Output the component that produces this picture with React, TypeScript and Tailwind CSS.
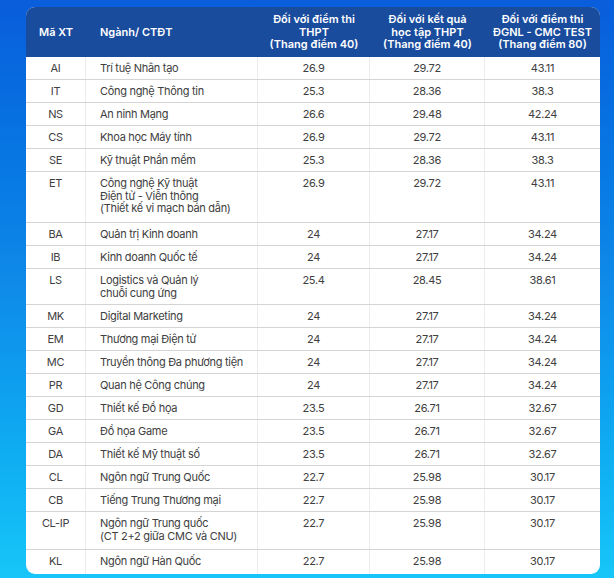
import React from "react";

type Row = { code: string; name: string[]; a: string; b: string; c: string; h: string };

const rows: Row[] = [
  { code: "AI", name: ["Trí tuệ Nhân tạo"], a: "26.9", b: "29.72", c: "43.11", h: "h-[23px]" },
  { code: "IT", name: ["Công nghệ Thông tin"], a: "25.3", b: "28.36", c: "38.3", h: "h-[23px]" },
  { code: "NS", name: ["An ninh Mạng"], a: "26.6", b: "29.48", c: "42.24", h: "h-[23px]" },
  { code: "CS", name: ["Khoa học Máy tính"], a: "26.9", b: "29.72", c: "43.11", h: "h-[23px]" },
  { code: "SE", name: ["Kỹ thuật Phần mềm"], a: "25.3", b: "28.36", c: "38.3", h: "h-[23px]" },
  {
    code: "ET",
    name: ["Công nghệ Kỹ thuật", "Điện tử - Viễn thông", "(Thiết kế vi mạch bán dẫn)"],
    a: "26.9",
    b: "29.72",
    c: "43.11",
    h: "h-[51px]",
  },
  { code: "BA", name: ["Quản trị Kinh doanh"], a: "24", b: "27.17", c: "34.24", h: "h-[23px]" },
  { code: "IB", name: ["Kinh doanh Quốc tế"], a: "24", b: "27.17", c: "34.24", h: "h-[23px]" },
  { code: "LS", name: ["Logistics và Quản lý", "chuỗi cung ứng"], a: "25.4", b: "28.45", c: "38.61", h: "h-[36px]" },
  { code: "MK", name: ["Digital Marketing"], a: "24", b: "27.17", c: "34.24", h: "h-[23px]" },
  { code: "EM", name: ["Thương mại Điện tử"], a: "24", b: "27.17", c: "34.24", h: "h-[23px]" },
  { code: "MC", name: ["Truyền thông Đa phương tiện"], a: "24", b: "27.17", c: "34.24", h: "h-[23px]" },
  { code: "PR", name: ["Quan hệ Công chúng"], a: "24", b: "27.17", c: "34.24", h: "h-[23px]" },
  { code: "GD", name: ["Thiết kế Đồ họa"], a: "23.5", b: "26.71", c: "32.67", h: "h-[23px]" },
  { code: "GA", name: ["Đồ họa Game"], a: "23.5", b: "26.71", c: "32.67", h: "h-[23px]" },
  { code: "DA", name: ["Thiết kế Mỹ thuật số"], a: "23.5", b: "26.71", c: "32.67", h: "h-[23px]" },
  { code: "CL", name: ["Ngôn ngữ Trung Quốc"], a: "22.7", b: "25.98", c: "30.17", h: "h-[23px]" },
  { code: "CB", name: ["Tiếng Trung Thương mại"], a: "22.7", b: "25.98", c: "30.17", h: "h-[23px]" },
  {
    code: "CL-IP",
    name: ["Ngôn ngữ Trung quốc", "(CT 2+2 giữa CMC và CNU)"],
    a: "22.7",
    b: "25.98",
    c: "30.17",
    h: "h-[38px]",
  },
  { code: "KL", name: ["Ngôn ngữ Hàn Quốc"], a: "22.7", b: "25.98", c: "30.17", h: "h-[24px]" },
];

const grid = "grid grid-cols-[60px_172px_112px_115px_115px]";

export default function App() {
  return (
    <div
      className="w-full min-h-[578px] h-[578px] overflow-hidden bg-gradient-to-b from-[#0a5ddb] via-[#0f8be9] to-[#17c6f8] pt-[7px] pl-[26px]"
      style={{ fontFamily: "Inter, 'Noto Sans', sans-serif" }}
    >
      <div className="w-[574px] rounded-[9px] overflow-hidden bg-white">
        <div className={`${grid} h-[50px] bg-[#1a4c9e] text-white text-[11px] font-semibold leading-[12.5px]`}>
          <div className="flex items-center justify-center">Mã XT</div>
          <div className="flex items-center pl-[14px]">Ngành/ CTĐT</div>
          <div className="flex items-center justify-center text-center">
            Đối với điểm thi
            <br />
            THPT
            <br />
            (Thang điểm 40)
          </div>
          <div className="flex items-center justify-center text-center">
            Đối với kết quả
            <br />
            học tập THPT
            <br />
            (Thang điểm 40)
          </div>
          <div className="flex items-center justify-center text-center">
            Đối với điểm thi
            <br />
            ĐGNL - CMC TEST
            <br />
            (Thang điểm 80)
          </div>
        </div>
        {rows.map((r, i) => (
          <div
            key={r.code}
            className={`${grid} ${r.h} text-[11px] leading-[12.5px] tracking-[-0.3px] text-[#404040] ${
              i < rows.length - 1 ? "border-b border-[#d4d4d4]" : ""
            }`}
          >
            <div className="pt-[5px] text-center border-r border-[#ececec]">{r.code}</div>
            <div className="pt-[5px] pl-[14px] border-r border-[#ececec]">
              {r.name.map((n) => (
                <div key={n}>{n}</div>
              ))}
            </div>
            <div className="pt-[5px] text-center border-r border-[#ececec]">{r.a}</div>
            <div className="pt-[5px] text-center border-r border-[#ececec]">{r.b}</div>
            <div className="pt-[5px] text-center">{r.c}</div>
          </div>
        ))}
      </div>
    </div>
  );
}
